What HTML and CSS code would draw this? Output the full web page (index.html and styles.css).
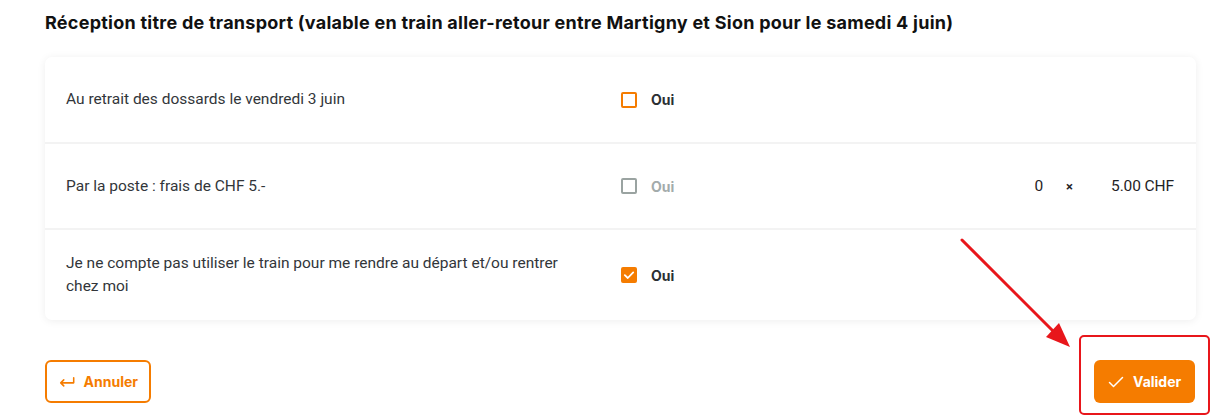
FILE: index.html
```html
<!DOCTYPE html>
<html lang="fr">
<head>
<meta charset="utf-8">
<link rel="stylesheet" href="styles.css">
</head>
<body>
<div class="page">
  <h2 class="title">Réception titre de transport (valable en train aller-retour entre Martigny et Sion pour le samedi 4 juin)</h2>
  <div class="card">
    <div class="row">
      <div class="label">Au retrait des dossards le vendredi 3 juin</div>
      <div class="choice"><span class="box"></span><span class="oui">Oui</span></div>
      <div class="price"></div>
    </div>
    <div class="row">
      <div class="label">Par la poste : frais de CHF 5.-</div>
      <div class="choice disabled"><span class="box"></span><span class="oui">Oui</span></div>
      <div class="price"><span class="qty">0</span><span class="times">×</span><span class="amount">5.00 CHF</span></div>
    </div>
    <div class="row">
      <div class="label">Je ne compte pas utiliser le train pour me rendre au départ et/ou rentrer chez moi</div>
      <div class="choice"><span class="box checked"><svg viewBox="0 0 16 16" width="16" height="16"><path d="M3.8 8.2 L6.8 11 L12.2 5.4" fill="none" stroke="#fff" stroke-width="1.8" stroke-linecap="round" stroke-linejoin="round"/></svg></span><span class="oui">Oui</span></div>
      <div class="price"></div>
    </div>
  </div>
  <div class="actions">
    <button class="btn btn-outline"><svg viewBox="0 0 18 12" width="18" height="12"><path d="M17 1 V7 H2 M5.5 3.5 L2 7 L5.5 10.5" fill="none" stroke="#f57c00" stroke-width="1.8" stroke-linecap="round" stroke-linejoin="round"/></svg><span>Annuler</span></button>
    <button class="btn btn-fill"><svg viewBox="0 0 16 12" width="16" height="12"><path d="M1.5 6.5 L5.5 10.5 L14.5 1.5" fill="none" stroke="#fff" stroke-width="1.5" stroke-linecap="round" stroke-linejoin="round"/></svg><span>Valider</span></button>
  </div>
</div>
<svg class="annot" width="1229" height="418" viewBox="0 0 1229 418">
  <line x1="962" y1="240" x2="1058" y2="336" stroke="#e8161b" stroke-width="3" stroke-linecap="round"/>
  <polygon points="1070,347 1046,337 1059,323" fill="#e8161b"/>
  <rect x="1080" y="336" width="129" height="78" rx="4" fill="none" stroke="#e8161b" stroke-width="2"/>
</svg>
</body>
</html>
```
FILE: styles.css
```css
* { box-sizing: border-box; }
html, body { margin: 0; padding: 0; background: #fff; }
body { width: 1229px; height: 418px; overflow: hidden; position: relative; font-family: Roboto, "Liberation Sans", sans-serif; color: #2f3336; }
.page { padding: 11px 33px 0 45px; }
.title {
  margin: 0 0 22px 0;
  font-family: Inter, "Liberation Sans", sans-serif;
  font-weight: 700;
  font-size: 18px;
  line-height: 24px;
  color: #111;
  letter-spacing: 0.25px;
}
.card {
  background: #fff;
  border-radius: 7px;
  box-shadow: 0 1px 8px rgba(0,0,0,0.07);
}
.row {
  display: grid;
  grid-template-columns: 555px 1fr auto;
  align-items: center;
  min-height: 86px;
  padding: 21px 22px 21px 21px;
  border-top: 2px solid #f3f3f3;
}
.row:first-child { border-top: 0; min-height: 85px; }
.row:last-child { padding: 22px 22px 22px 21px; }
.label {
  font-size: 15.5px;
  line-height: 23px;
  letter-spacing: 0;
  padding-right: 45px;
  color: #32363a;
}
.choice { display: flex; align-items: center; gap: 14px; }
.box {
  width: 16px; height: 16px;
  border: 2px solid #f57c00;
  border-radius: 2px;
  display: inline-block;
  position: relative;
}
.box.checked { background: #f57c00; border-color: #f57c00; }
.box.checked svg { position: absolute; left: -2px; top: -2px; }
.oui {
  font-family: Inter, "Liberation Sans", sans-serif;
  font-weight: 700;
  font-size: 14px;
  color: #2b2f33;
}
.disabled .box { border-color: #9aa3a1; }
.disabled .oui { color: #a3abab; }
.price { display: flex; align-items: center; font-size: 15.5px; color: #1f2326; }
.times { margin-left: 23px; font-size: 13px; font-weight: 700; }
.amount { margin-left: 38px; letter-spacing: -0.1px; }
.actions {
  display: flex;
  justify-content: space-between;
  margin-top: 40px;
  padding-right: 1px;
}
.btn {
  height: 43px;
  border-radius: 6px;
  display: flex;
  align-items: center;
  gap: 9px;
  font-family: Inter, "Liberation Sans", sans-serif;
  font-weight: 700;
  font-size: 14px;
  cursor: pointer;
}
.btn-outline {
  border: 2px solid #f57c00;
  background: #fff;
  color: #f57c00;
  padding: 0 11px 0 12px;
  width: 106px;
}
.btn-fill {
  border: 0;
  background: #f57c00;
  color: #fff;
  padding: 0 12px 0 14px;
  width: 101px;
}
.annot { position: absolute; left: 0; top: 0; pointer-events: none; }
```
